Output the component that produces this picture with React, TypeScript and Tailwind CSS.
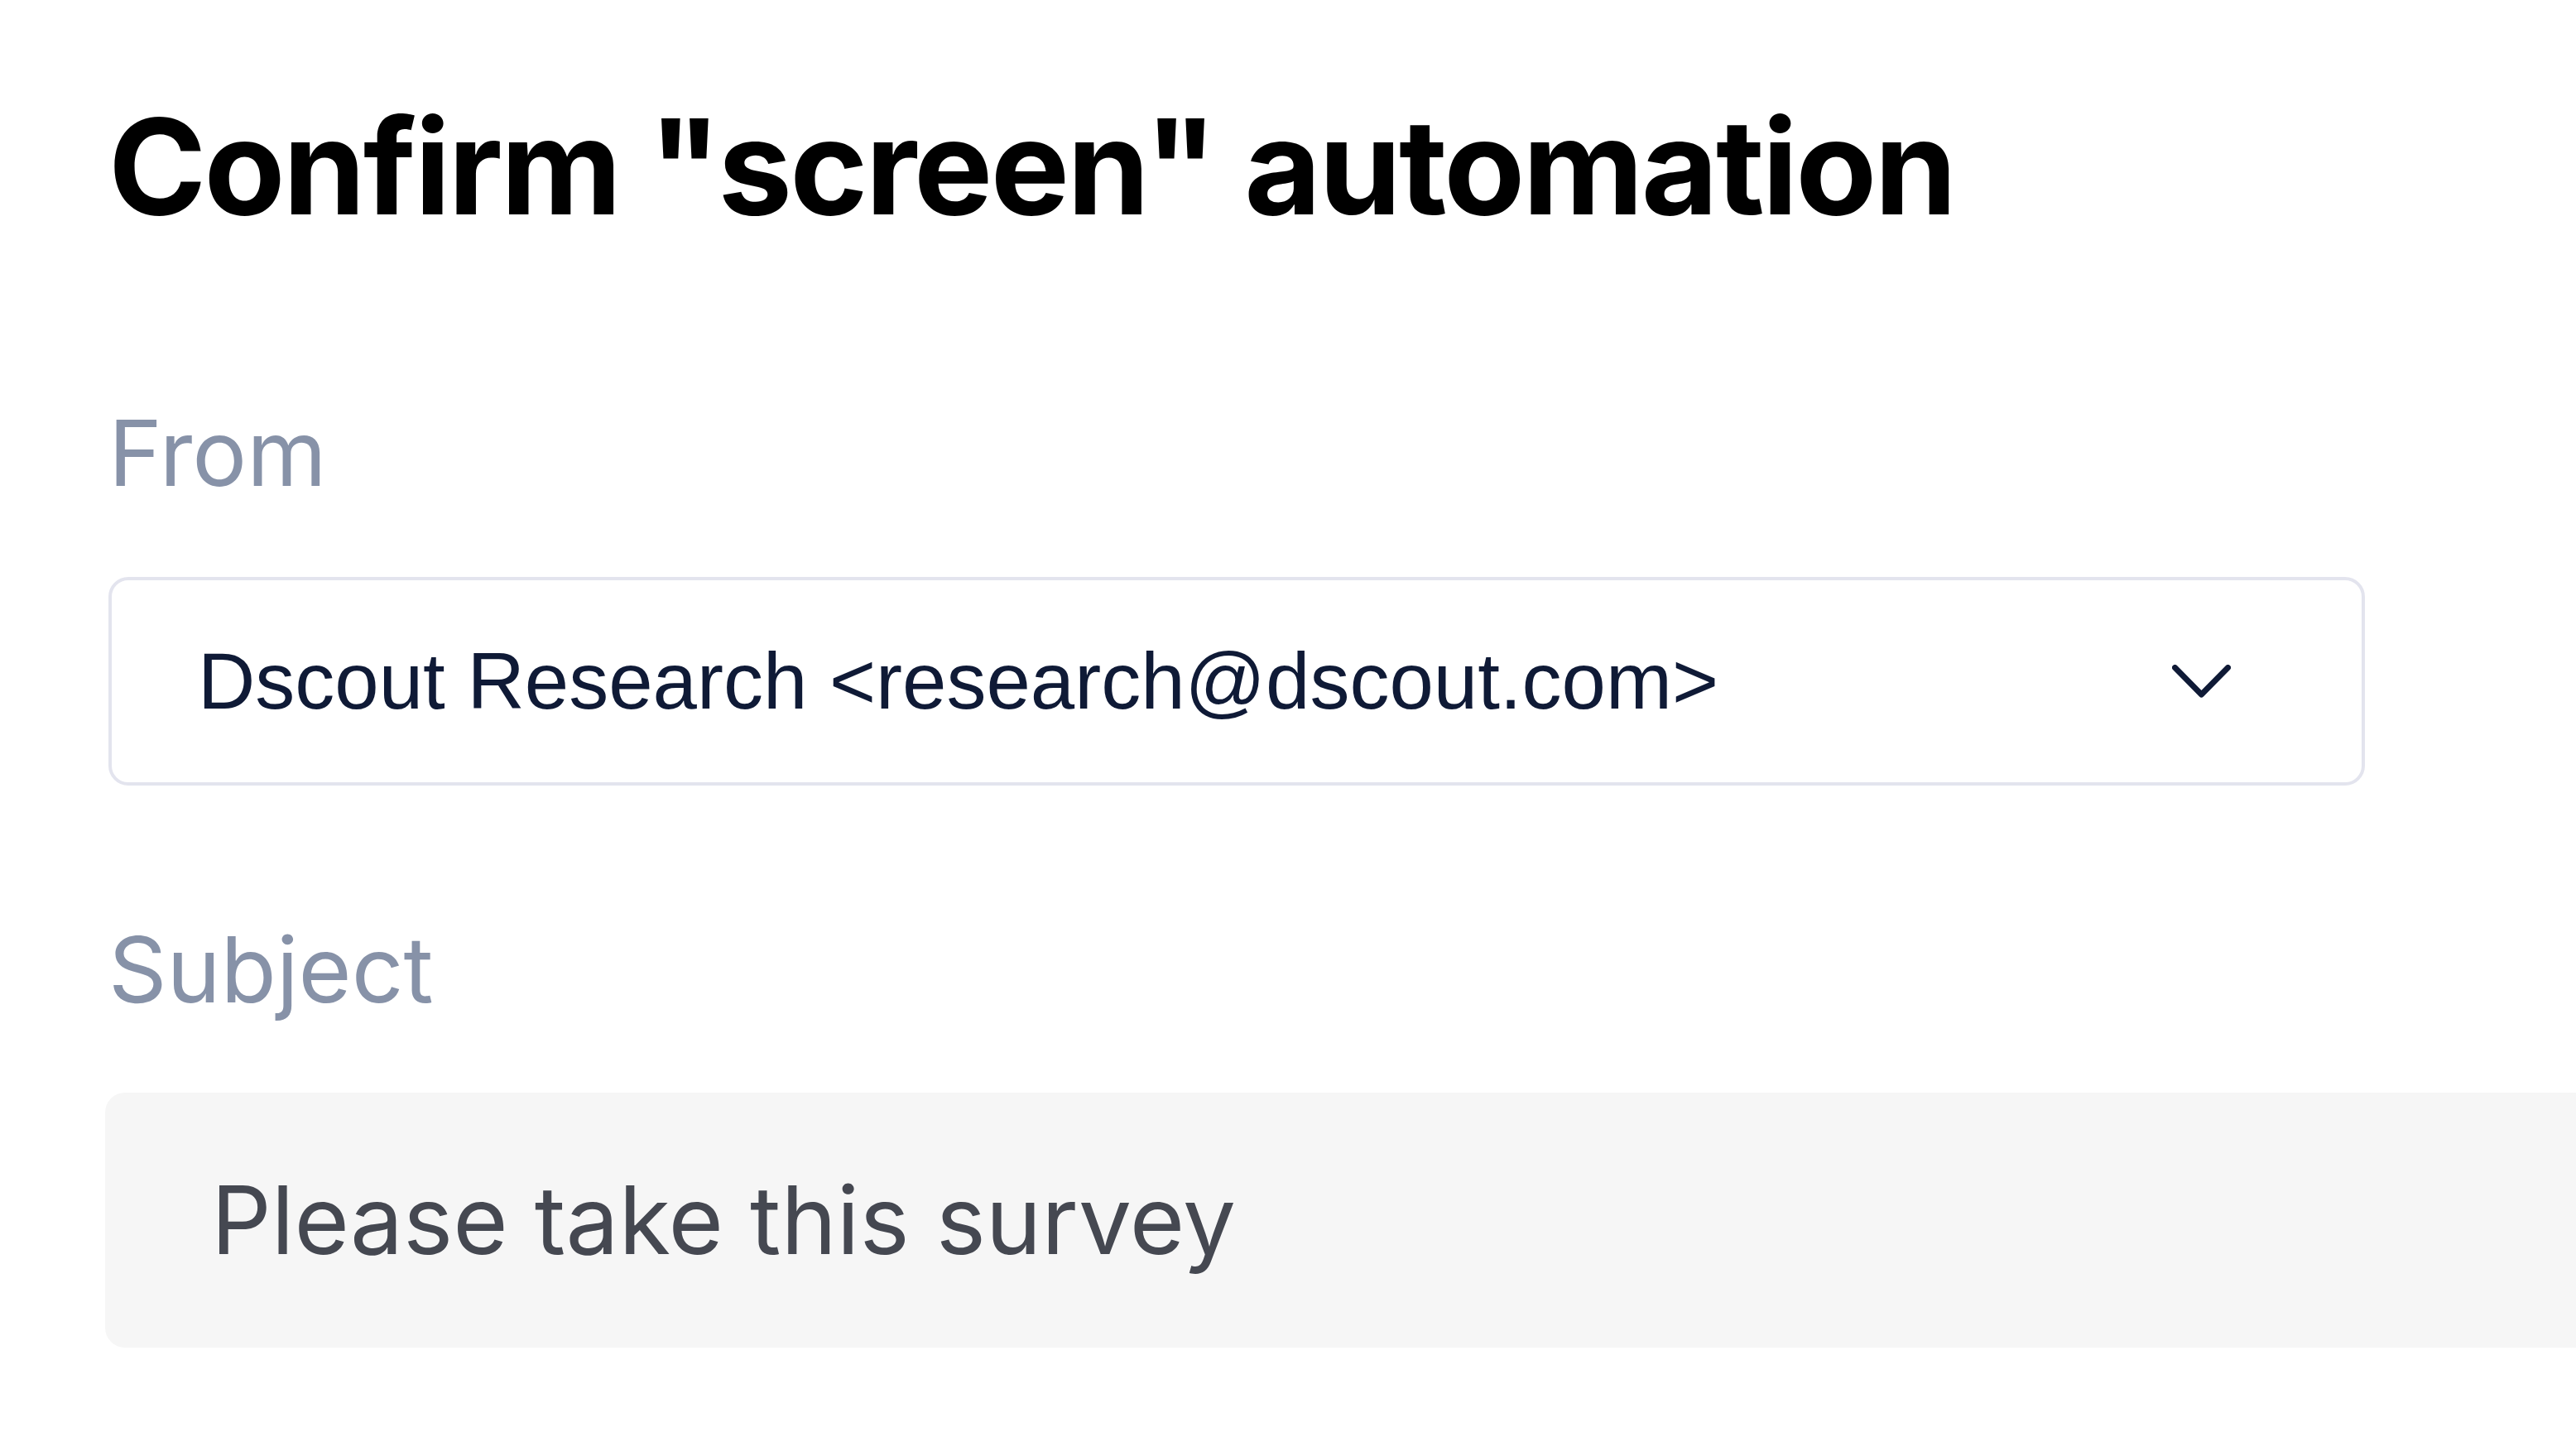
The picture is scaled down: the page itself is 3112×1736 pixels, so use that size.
const inter = { fontFamily: 'Inter, "Noto Sans", sans-serif' };

function SenderSelect() {
  return (
    <div className="mt-[95px] flex h-[252px] w-[2726px] items-center justify-between rounded-[24px] border-[4px] border-[#e3e4ee] bg-white pl-[104px] pr-[158px]">
      <span className="font-['Liberation_Sans',Arial,sans-serif] text-[96px] leading-none text-[#0f1a36]">
        Dscout Research &lt;research@dscout.com&gt;
      </span>
      <svg width="71" height="40" viewBox="0 0 71 40" fill="none" className="shrink-0">
        <path
          d="M3.5 3.5 L35.5 36 L67.5 3.5"
          stroke="#0f1a36"
          strokeWidth="7"
          strokeLinecap="round"
          strokeLinejoin="round"
        />
      </svg>
    </div>
  );
}

export default function App() {
  return (
    <div className="h-screen w-screen overflow-hidden bg-white">
      <div className="pl-[131px] pt-[121px]" style={inter}>
        <h1 className="text-[160px] font-bold leading-[160px] tracking-[-2.8px] text-black">
          Confirm "screen" automation
        </h1>

        <div className="mt-[211px] text-[110px] leading-[110px] text-[#8792a8]">From</div>
        <SenderSelect />

        <div className="mt-[167px] text-[110px] leading-[110px] text-[#8792a8]">Subject</div>
        <div className="-ml-[4px] mt-[94px] flex h-[308px] w-[3200px] items-center rounded-[24px] bg-[#f6f6f6] pl-[128px]">
          <span className="text-[114px] leading-none text-[#454851]">Please take this survey</span>
        </div>
      </div>
    </div>
  );
}
